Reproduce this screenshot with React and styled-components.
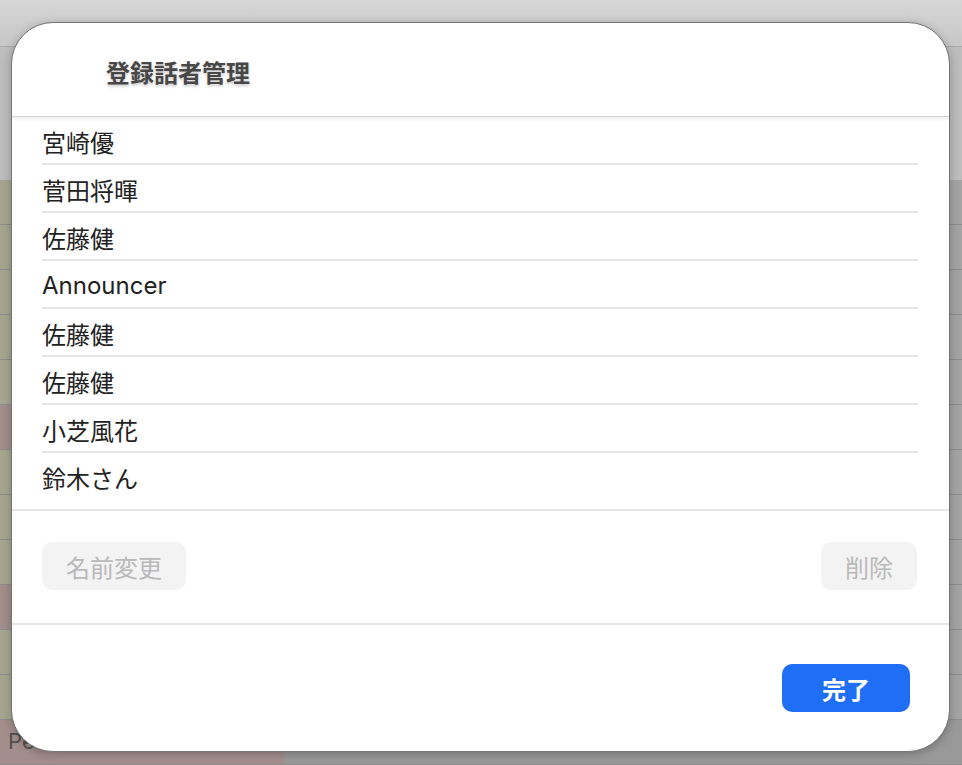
import React from "react";
import styled, { createGlobalStyle } from "styled-components";

const GlobalStyle = createGlobalStyle`
  html, body {
    margin: 0;
    padding: 0;
    overflow: hidden;
    background: #c4c4c4;
  }
  body {
    font-family: Inter, "Noto Sans CJK JP", sans-serif;
  }
`;

const Screen = styled.div`
  position: relative;
  width: 962px;
  height: 765px;
  overflow: hidden;
`;

const AppBackdrop = styled.div`
  display: flex;
  flex-direction: column;
  height: 100%;
`;

const TopBar = styled.div`
  height: 47px;
  border-bottom: 1px solid #a9a9a9;
  background: linear-gradient(#d6d6d6, #c7c7c7);
`;

const UpperArea = styled.div`
  height: 136px;
  background: #bdbdbd;
`;

const BgRow = styled.div`
  display: flex;
  height: 44px;
  border-bottom: 1px solid #8c8c8c;
  flex-shrink: 0;
`;

const BgLabel = styled.div`
  width: 284px;
  padding: 8px 0 0 8px;
  box-sizing: border-box;
  font-size: 22px;
  color: #505050;
  background: ${(p) => (p.$tone === "pink" ? "#a38d8d" : "#a6a690")};
`;

const BgRest = styled.div`
  flex: 1;
  background: ${(p) => (p.$last ? "#999999" : "#a4a4a4")};
`;

const Dialog = styled.div`
  position: absolute;
  left: 11px;
  top: 22px;
  width: 939px;
  height: 730px;
  box-sizing: border-box;
  display: flex;
  flex-direction: column;
  background: #ffffff;
  border: 1px solid #747474;
  border-radius: 42px;
  overflow: hidden;
  box-shadow: 0 2px 10px rgba(0, 0, 0, 0.25);
`;

const Header = styled.div`
  height: 94px;
  flex-shrink: 0;
  display: flex;
  align-items: center;
  padding: 4px 0 0 94px;
  box-sizing: border-box;
  border-bottom: 1px solid #d4d4d4;
  box-shadow: 0 2px 4px rgba(0, 0, 0, 0.07);
  position: relative;
  z-index: 1;
`;

const Title = styled.h1`
  margin: 0;
  font-size: 24px;
  font-weight: 700;
  color: #474747;
  text-shadow: 0 2px 3px rgba(0, 0, 0, 0.2);
`;

const SpeakerList = styled.ul`
  list-style: none;
  margin: 0;
  padding: 0 31px 8px 30px;
`;

const SpeakerRow = styled.li`
  height: 48px;
  box-sizing: border-box;
  display: flex;
  align-items: center;
  padding-top: 2px;
  font-size: 24px;
  color: #222222;
  border-bottom: ${(p) => (p.$last ? "2px solid transparent" : "2px solid #e6e6e6")};
`;

const Actions = styled.div`
  display: flex;
  justify-content: space-between;
  border-top: 2px solid #e6e6e6;
  padding: 31px 32px 33px 30px;
`;

const GhostButton = styled.button`
  height: 48px;
  padding: 0 24px;
  border: none;
  border-radius: 10px;
  background: #f3f3f3;
  color: #b9b9b9;
  font-family: inherit;
  font-size: 24px;
`;

const Footer = styled.div`
  flex: 1;
  display: flex;
  justify-content: flex-end;
  align-items: flex-start;
  border-top: 2px solid #e6e6e6;
  padding: 39px 39px 0 0;
`;

const DoneButton = styled.button`
  height: 48px;
  width: 128px;
  border: none;
  border-radius: 10px;
  background: #1f6ff6;
  color: #ffffff;
  font-family: inherit;
  font-size: 24px;
  font-weight: 700;
`;

const speakers = [
  "宮崎優",
  "菅田将暉",
  "佐藤健",
  "Announcer",
  "佐藤健",
  "佐藤健",
  "小芝風花",
  "鈴木さん",
];

const bgRows = [
  { tone: "olive" },
  { tone: "olive" },
  { tone: "olive" },
  { tone: "olive" },
  { tone: "olive" },
  { tone: "pink" },
  { tone: "olive" },
  { tone: "olive" },
  { tone: "olive" },
  { tone: "pink" },
  { tone: "olive" },
  { tone: "olive" },
  { tone: "pink", text: "Pe", last: true },
];

export default function App() {
  return (
    <Screen>
      <GlobalStyle />
      <AppBackdrop>
        <TopBar />
        <UpperArea />
        {bgRows.map((r, i) => (
          <BgRow key={i}>
            <BgLabel $tone={r.tone}>{r.text}</BgLabel>
            <BgRest $last={r.last} />
          </BgRow>
        ))}
      </AppBackdrop>

      <Dialog>
        <Header>
          <Title>登録話者管理</Title>
        </Header>

        <SpeakerList>
          {speakers.map((name, i) => (
            <SpeakerRow key={i} $last={i === speakers.length - 1}>
              {name}
            </SpeakerRow>
          ))}
        </SpeakerList>

        <Actions>
          <GhostButton disabled>名前変更</GhostButton>
          <GhostButton disabled>削除</GhostButton>
        </Actions>

        <Footer>
          <DoneButton>完了</DoneButton>
        </Footer>
      </Dialog>
    </Screen>
  );
}
